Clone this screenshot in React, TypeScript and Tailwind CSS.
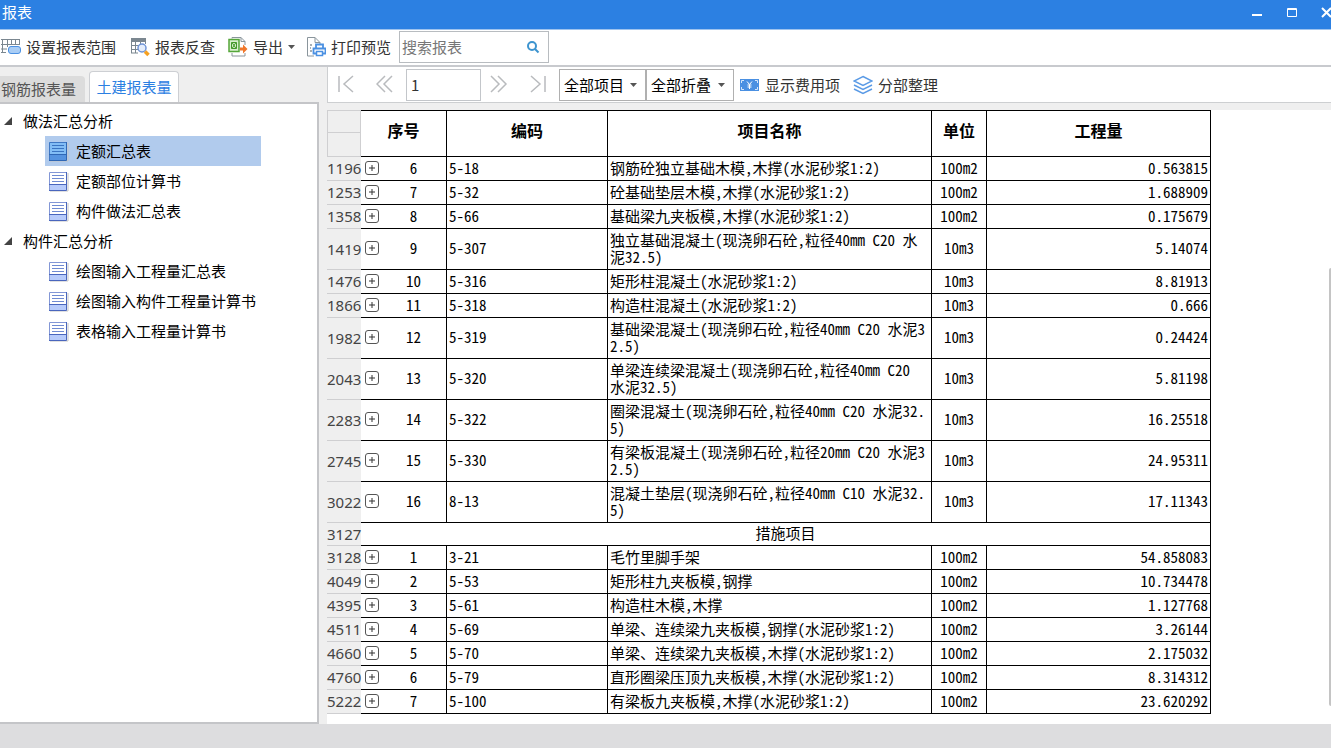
import { useState } from "react"

type ReportRow = {
  line: number
  no?: number
  code?: string
  name: string
  unit?: string
  qty?: string
}

const rows: ReportRow[] = [
  { line: 1196, no: 6, code: "5-18", name: "钢筋砼独立基础木模,木撑(水泥砂浆1:2)", unit: "100m2", qty: "0.563815" },
  { line: 1253, no: 7, code: "5-32", name: "砼基础垫层木模,木撑(水泥砂浆1:2)", unit: "100m2", qty: "1.688909" },
  { line: 1358, no: 8, code: "5-66", name: "基础梁九夹板模,木撑(水泥砂浆1:2)", unit: "100m2", qty: "0.175679" },
  { line: 1419, no: 9, code: "5-307", name: "独立基础混凝土(现浇卵石砼,粒径40mm C20 水泥32.5)", unit: "10m3", qty: "5.14074" },
  { line: 1476, no: 10, code: "5-316", name: "矩形柱混凝土(水泥砂浆1:2)", unit: "10m3", qty: "8.81913" },
  { line: 1866, no: 11, code: "5-318", name: "构造柱混凝土(水泥砂浆1:2)", unit: "10m3", qty: "0.666" },
  { line: 1982, no: 12, code: "5-319", name: "基础梁混凝土(现浇卵石砼,粒径40mm C20 水泥32.5)", unit: "10m3", qty: "0.24424" },
  { line: 2043, no: 13, code: "5-320", name: "单梁连续梁混凝土(现浇卵石砼,粒径40mm C20 水泥32.5)", unit: "10m3", qty: "5.81198" },
  { line: 2283, no: 14, code: "5-322", name: "圈梁混凝土(现浇卵石砼,粒径40mm C20 水泥32.5)", unit: "10m3", qty: "16.25518" },
  { line: 2745, no: 15, code: "5-330", name: "有梁板混凝土(现浇卵石砼,粒径20mm C20 水泥32.5)", unit: "10m3", qty: "24.95311" },
  { line: 3022, no: 16, code: "8-13", name: "混凝土垫层(现浇卵石砼,粒径40mm C10 水泥32.5)", unit: "10m3", qty: "17.11343" },
  { line: 3127, name: "措施项目" },
  { line: 3128, no: 1, code: "3-21", name: "毛竹里脚手架", unit: "100m2", qty: "54.858083" },
  { line: 4049, no: 2, code: "5-53", name: "矩形柱九夹板模,钢撑", unit: "100m2", qty: "10.734478" },
  { line: 4395, no: 3, code: "5-61", name: "构造柱木模,木撑", unit: "100m2", qty: "1.127768" },
  { line: 4511, no: 4, code: "5-69", name: "单梁、连续梁九夹板模,钢撑(水泥砂浆1:2)", unit: "100m2", qty: "3.26144" },
  { line: 4660, no: 5, code: "5-70", name: "单梁、连续梁九夹板模,木撑(水泥砂浆1:2)", unit: "100m2", qty: "2.175032" },
  { line: 4760, no: 6, code: "5-79", name: "直形圈梁压顶九夹板模,木撑(水泥砂浆1:2)", unit: "100m2", qty: "8.314312" },
  { line: 5222, no: 7, code: "5-100", name: "有梁板九夹板模,木撑(水泥砂浆1:2)", unit: "100m2", qty: "23.620292" },
]

const groups = [
  { title: "做法汇总分析", items: ["定额汇总表", "定额部位计算书", "构件做法汇总表"] },
  { title: "构件汇总分析", items: ["绘图输入工程量汇总表", "绘图输入构件工程量计算书", "表格输入工程量计算书"] },
]

function RangeIcon() {
  return (
    <svg width="20" height="20" viewBox="0 0 20 20" fill="none" aria-hidden="true">
      <path d="M0 2.5h19M1.500 2v13M6.500 2v8M10.500 2v6M14.500 2v6M0 7.500h19M0 12h6M0 15.500h5M18.500 2v6" stroke="#7b8790" />
      <rect x="7.500" y="9.500" width="12" height="7" rx="2.500" fill="#a9cdf5" stroke="#4a90e2" />
    </svg>
  )
}

function LookupIcon() {
  return (
    <svg width="20" height="20" viewBox="0 0 20 20" fill="none" aria-hidden="true">
      <path d="M1 1h15v4H1z" fill="#7b8790" />
      <path d="M1.500 1v15M5.500 1v15M10.500 1v7M15.500 1v6M1 8.500h8M1 12.500h7M1 16h7" stroke="#7b8790" />
      <circle cx="12" cy="11" r="4" fill="#e4edfb" stroke="#6e93d6" strokeWidth="1.500" />
      <path d="M15 14.500l3.500 3.500" stroke="#f5a021" strokeWidth="3.500" />
    </svg>
  )
}

function ExportIcon() {
  return (
    <svg width="20" height="20" viewBox="0 0 20 20" fill="none" aria-hidden="true">
      <path d="M4 1.500V.5h9l4 4V8M13 .5v4h4M4 16v3h13v-3" stroke="#8a959c" />
      <rect x="1" y="2.500" width="10" height="12" fill="#d9efcf" stroke="#55a63a" strokeWidth="1.500" />
      <path d="M4 5.500l4 6M8 5.500l-4 6M3.500 5.500h5v6h-5z" stroke="#45982b" />
      <path d="M12 10.500h3V7.500l4.500 4.500-4.500 4.500v-3h-3z" fill="#f0772b" />
    </svg>
  )
}

function PrintIcon() {
  return (
    <svg width="20" height="20" viewBox="0 0 20 20" fill="none" aria-hidden="true">
      <path d="M8 19H1.500V.5H9l5 5V7M9 .5v5h5" stroke="#8a959c" />
      <path d="M4 8h2M4 11h1M4 14h2" stroke="#8a959c" strokeWidth="1.500" />
      <path d="M10 11V7.500h7V11M10 16.500H7.500V11.500h12v5H17" stroke="#4a90e2" strokeWidth="1.800" />
      <rect x="10.500" y="14.500" width="6" height="4" fill="#fff" stroke="#4a90e2" strokeWidth="1.500" />
    </svg>
  )
}

function FeeIcon() {
  return (
    <svg width="20" height="12" viewBox="0 0 20 12" fill="none" aria-hidden="true">
      <rect width="19" height="12" fill="#4a90e2" />
      <path d="M1.500 4V1.500H4M15 1.500h2.500V4M1.500 8v2.500H4M15 10.500h2.500V8" stroke="#d6e6fa" />
      <path d="M7 2.500l2.500 3 2.500-3M9.500 5.500V10M7.500 6h4M7.500 8h4" stroke="#fff" />
    </svg>
  )
}

function LayersIcon() {
  return (
    <svg width="20" height="20" viewBox="0 0 20 20" fill="none" stroke="#5b9be6" strokeWidth="1.500" aria-hidden="true">
      <path d="M10 1.500l9 4.500-9 4.500L1 6z" />
      <path d="M1 10l9 4.500 9-4.500M1 14l9 4.500 9-4.500" />
    </svg>
  )
}

function ReportIcon({ active }: { active: boolean }) {
  return (
    <svg width="21" height="21" viewBox="0 0 21 21" fill="none" aria-hidden="true">
      <path d="M2 20h18V2" stroke="#c4c4c4" />
      <rect x="1" y="1" width="18" height="18" fill={active ? "#82bdf5" : "#fff"} />
      <rect x="1" y="13" width="18" height="6" fill={active ? "#5593e0" : "#b7cbfb"} />
      <path d="M1.500 19V1.500H19" stroke={active ? "#3f78c4" : "#8397d6"} />
      <path d="M18.500 1v18.500H1M1 13.500h18" stroke={active ? "#2f67b5" : "#4a66bd"} />
      <path d="M4 4.500h12M4 7.500h12M4 10.500h12" stroke={active ? "#3a74c2" : "#6f8ad2"} />
    </svg>
  )
}

function PageButton({ label, d }: { label: string; d: string }) {
  return (
    <button type="button" aria-label={label} className="flex h-8 w-[39px] items-center justify-center pr-1 pb-px">
      <svg width="18" height="18" viewBox="0 0 18 18" fill="none" stroke="#b9bbbe" strokeWidth="1.500" aria-hidden="true">
        <path d={d} />
      </svg>
    </button>
  )
}

function Caret() {
  return (
    <svg width="7" height="4" viewBox="0 0 7 4" aria-hidden="true">
      <path d="M0 0h7L3.500 4z" fill="#555" />
    </svg>
  )
}

function Picker({ label, className }: { label: string; className: string }) {
  return (
    <div className={`relative h-8 border border-[#b0b0b0] bg-white ${className}`}>
      <select aria-label={label} className="h-full w-full appearance-none bg-transparent pl-1 text-black outline-none">
        <option>{label}</option>
      </select>
      <span className="pointer-events-none absolute inset-y-0 right-2 flex items-center">
        <Caret />
      </span>
    </div>
  )
}

function rowHeight(row: ReportRow) {
  if (!row.code) return "h-[23px]"
  return row.name.length > 24 ? "h-[41px]" : "h-6"
}

function ReportTable() {
  const head = "border-t border-r border-b border-black bg-white p-0 pb-2 text-base leading-5 font-bold"
  const cell = "border-r border-b border-black px-[2px] pt-0 pb-[3px]"
  return (
    <table className="w-[884px] table-fixed border-separate border-spacing-0 leading-[17px] text-black [font-feature-settings:'hwid']">
      <colgroup>
        <col className="w-[34px]" />
        <col className="w-[86px]" />
        <col className="w-[161px]" />
        <col className="w-[324px]" />
        <col className="w-[55px]" />
        <col className="w-[224px]" />
      </colgroup>
      <thead>
        <tr className="h-[23px]">
          <td className="border border-[#cfcfd1] bg-[#efefef]" />
          <th rowSpan={2} className={head}>序号</th>
          <th rowSpan={2} className={head}>编码</th>
          <th rowSpan={2} className={head}>项目名称</th>
          <th rowSpan={2} className={head}>单位</th>
          <th rowSpan={2} className={head}>工程量</th>
        </tr>
        <tr className="h-6">
          <td className="border-x border-b border-[#cfcfd1] bg-[#efefef]" />
        </tr>
      </thead>
      <tbody>
        {rows.map((row) => (
          <tr key={row.line} className={rowHeight(row)}>
            <td className="border-b border-[#cfcfd1] bg-[#efefef] p-0 font-['Noto_Sans',sans-serif] text-[#444]">
              {row.line}
            </td>
            {row.code ? (
              <>
                <td className={cell}>
                  <div className="flex items-center pl-[2px]">
                    <button
                      type="button"
                      aria-label={`展开 ${row.code}`}
                      className="mt-px flex size-[14px] items-center justify-center rounded-[3px] border border-[#555]"
                    >
                      <svg width="8" height="8" viewBox="0 0 8 8" stroke="#333" aria-hidden="true">
                        <path d="M4 1v6M1 4h6" />
                      </svg>
                    </button>
                    <span className="flex-1 pl-1 text-center">{row.no}</span>
                  </div>
                </td>
                <td className={cell}>{row.code}</td>
                <td className={`${cell} break-all`}>{row.name}</td>
                <td className={`${cell} text-center`}>{row.unit}</td>
                <td className={`${cell} text-right`}>{row.qty}</td>
              </>
            ) : (
              <td colSpan={5} className={`${cell} text-center`}>
                {row.name}
              </td>
            )}
          </tr>
        ))}
      </tbody>
    </table>
  )
}

export default function App() {
  const [selected, setSelected] = useState("定额汇总表")
  const [page, setPage] = useState("1")

  return (
    <div className="flex min-h-screen flex-col bg-[#efefef] font-['Noto_Sans_CJK_SC',sans-serif] text-[15px] leading-5 text-[#333]">
      {/* Title bar */}
      <header className="flex h-[30px] items-center justify-between overflow-hidden border-b border-[#9fc3ee] bg-[#2c80e2] pl-[2px] text-white">
        <h1 className="pb-[6px]">报表</h1>
        <div className="-mr-1 flex gap-5 pb-1">
          <button type="button" aria-label="最小化">
            <svg width="15" height="15" viewBox="0 0 15 15" stroke="#fff" strokeWidth="2" aria-hidden="true">
              <path d="M2 10h10" />
            </svg>
          </button>
          <button type="button" aria-label="最大化">
            <svg width="15" height="15" viewBox="0 0 15 15" fill="none" stroke="#fff" aria-hidden="true">
              <path d="M2.500 3.500h9v8h-9zM2 4.500h10" />
            </svg>
          </button>
          <button type="button" aria-label="关闭">
            <svg width="15" height="15" viewBox="0 0 15 15" stroke="#fff" strokeWidth="2" aria-hidden="true">
              <path d="M2 3l9 9M11 3l-9 9" />
            </svg>
          </button>
        </div>
      </header>

      {/* Toolbar */}
      <div className="flex h-[37px] items-center border-b-2 border-[#c8cace] bg-white pb-px pl-px">
        <button type="button" className="flex items-center gap-[5px]">
          <RangeIcon />
          设置报表范围
        </button>
        <button type="button" className="ml-[14px] flex items-center gap-[5px]">
          <LookupIcon />
          报表反查
        </button>
        <button type="button" className="ml-[13px] flex items-center gap-[5px]">
          <ExportIcon />
          导出
          <Caret />
        </button>
        <button type="button" className="ml-[11px] flex items-center gap-[5px]">
          <PrintIcon />
          打印预览
        </button>
        <label className="ml-2 flex h-8 w-[150px] items-center border border-[#b8bcc0] pr-2">
          <input
            type="search"
            aria-label="搜索报表"
            placeholder="搜索报表"
            className="w-full min-w-0 flex-1 bg-transparent pl-[2px] outline-none placeholder:text-[#777]"
          />
          <svg width="14" height="14" viewBox="0 0 14 14" fill="none" stroke="#3d94cf" strokeWidth="2" aria-hidden="true">
            <circle cx="6" cy="6" r="4" />
            <path d="M9 9l3.500 3.500" />
          </svg>
        </label>
      </div>

      <main className="flex flex-1 gap-2">
        {/* Report tree */}
        <aside className="flex w-[319px] shrink-0 flex-col">
          <div className="flex h-[35px] items-end gap-1">
            <button type="button" className="h-[26px] w-[85px] rounded-tr-sm bg-[#dcdcdc] pl-px text-left text-[#555]">
              钢筋报表量
            </button>
            <button type="button" className="h-[31px] w-[90px] rounded-t-sm border border-b-0 border-[#cdcfd3] bg-white text-[#2c80e2]">
              土建报表量
            </button>
          </div>
          <div className="flex-1 border-2 border-l-0 border-[#c4c5c8] bg-white pt-[2px]">
            {groups.map((group) => (
              <div key={group.title} className="text-black">
                <button type="button" className="flex h-[30px] items-center pl-1">
                  <svg width="8" height="8" viewBox="0 0 8 8" aria-hidden="true">
                    <path d="M8 0v8H0z" fill="#444" />
                  </svg>
                  <span className="pl-[11px]">{group.title}</span>
                </button>
                <ul className="pl-[45px]">
                  {group.items.map((item) => (
                    <li key={item}>
                      <button
                        type="button"
                        onClick={() => setSelected(item)}
                        className={`flex h-[30px] w-[216px] items-center gap-[7px] pl-[3px] whitespace-nowrap ${
                          item === selected ? "bg-[#b1cbed]" : ""
                        }`}
                      >
                        <ReportIcon active={item === selected} />
                        {item}
                      </button>
                    </li>
                  ))}
                </ul>
              </div>
            ))}
          </div>
        </aside>

        {/* Report view */}
        <section className="flex min-w-0 flex-1 flex-col">
          <div className="flex h-9 items-center border-b border-l border-[#cdcfd1] bg-white">
            <PageButton label="首页" d="M2 1v16M16 1L7 9l9 8" />
            <PageButton label="上一页" d="M9 1L1 9l8 8M16 1L8 9l8 8" />
            <input
              type="text"
              aria-label="页码"
              value={page}
              onChange={(e) => setPage(e.target.value)}
              className="h-8 w-[75px] border border-[#c3c6ca] pl-1 outline-none"
            />
            <PageButton label="下一页" d="M1 1l8 8-8 8M8 1l8 8-8 8" />
            <PageButton label="末页" d="M2 1l9 8-9 8M16 1v16" />
            <Picker label="全部项目" className="w-[87px]" />
            <Picker label="全部折叠" className="w-[88px]" />
            <button type="button" className="ml-[6px] flex items-center gap-[5px]">
              <FeeIcon />
              显示费用项
            </button>
            <button type="button" className="ml-[13px] flex items-center gap-[5px]">
              <LayersIcon />
              分部整理
            </button>
          </div>
          <div className="mt-[7px] flex flex-1 justify-between bg-white pb-[10px]">
            <ReportTable />
            {/* Scroll thumb */}
            <div className="mt-[158px] mb-2 w-[2px] rounded-l-sm bg-[#c4c4c4]" />
          </div>
        </section>
      </main>

      <footer className="h-6 bg-[#dddddf]" />
    </div>
  )
}
